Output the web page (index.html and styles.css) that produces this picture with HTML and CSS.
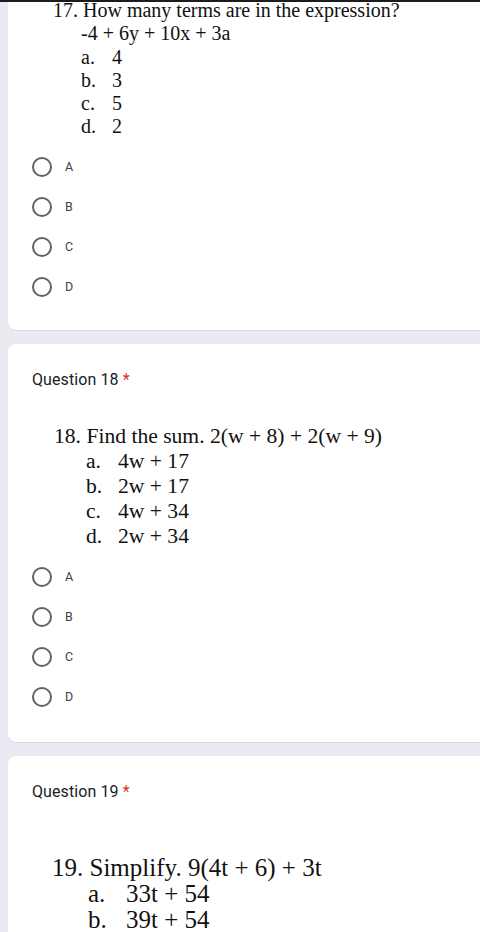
FILE: index.html
```html
<!DOCTYPE html>
<html lang="en">
<head>
  <meta charset="UTF-8" />
  <meta name="viewport" content="width=device-width, initial-scale=1.0"/>
  <title>Quiz – Questions 17 to 19</title>
  <link rel="stylesheet" href="styles.css">
</head>
<body>
<div class="top-edge"></div>

<div class="form">

  <!-- Question 17 (header scrolled out of view) -->
  <div class="card card-first">
    <div class="prompt q17">
      <div class="prompt-title">17. How many terms are in the expression?</div>
      <div class="prompt-line">-4 + 6y + 10x + 3a</div>
      <div class="choice"><span class="letter">a.</span><span>4</span></div>
      <div class="choice"><span class="letter">b.</span><span>3</span></div>
      <div class="choice"><span class="letter">c.</span><span>5</span></div>
      <div class="choice"><span class="letter">d.</span><span>2</span></div>
    </div>
    <div class="options">
      <label class="option"><span class="radio"></span><span class="option-text">A</span></label>
      <label class="option"><span class="radio"></span><span class="option-text">B</span></label>
      <label class="option"><span class="radio"></span><span class="option-text">C</span></label>
      <label class="option"><span class="radio"></span><span class="option-text">D</span></label>
    </div>
  </div>

  <div class="card">
    <div class="q-header">Question 18 <span class="required">*</span></div>
    <div class="prompt q18">
      <div class="prompt-title">18. Find the sum. 2(w + 8) + 2(w + 9)</div>
      <div class="choice"><span class="letter">a.</span><span>4w + 17</span></div>
      <div class="choice"><span class="letter">b.</span><span>2w + 17</span></div>
      <div class="choice"><span class="letter">c.</span><span>4w + 34</span></div>
      <div class="choice"><span class="letter">d.</span><span>2w + 34</span></div>
    </div>
    <div class="options">
      <label class="option"><span class="radio"></span><span class="option-text">A</span></label>
      <label class="option"><span class="radio"></span><span class="option-text">B</span></label>
      <label class="option"><span class="radio"></span><span class="option-text">C</span></label>
      <label class="option"><span class="radio"></span><span class="option-text">D</span></label>
    </div>
  </div>

  <div class="card card-last">
    <div class="q-header">Question 19 <span class="required">*</span></div>
    <div class="prompt q19">
      <div class="prompt-title">19. Simplify. 9(4t + 6) + 3t</div>
      <div class="choice"><span class="letter">a.</span><span>33t + 54</span></div>
      <div class="choice"><span class="letter">b.</span><span>39t + 54</span></div>
    </div>
  </div>

</div>
</body>
</html>
```

FILE: styles.css
```css
body {
  margin: 0;
  background: #ebeaf2;
  font-family: Roboto, 'Liberation Sans', sans-serif;
  color: #202124;
  height: 932px;
  overflow: hidden;
}

.top-edge {
  position: absolute;
  top: 0;
  left: 0;
  right: 0;
  height: 2px;
  background: #1c1c1e;
  z-index: 2;
}

.form {
  padding-left: 8px;
  display: flex;
  flex-direction: column;
  gap: 14px;
}

.card {
  background: #fff;
  border-radius: 8px 0 0 8px;
  box-shadow: 0 1px 0 #d8d7de;
  padding: 26.5px 0 24.5px 24px;
}

.card-first {
  border-radius: 0 0 0 8px;
  padding-top: 0;
  padding-bottom: 23px;
}

.card-last {
  padding-bottom: 40px;
}

.q-header {
  font-size: 16px;
  line-height: 20px;
  letter-spacing: 0.1px;
}

.required {
  color: #d93025;
}

/* question text pasted as an image in the original form */
.prompt {
  font-family: 'Liberation Serif', 'Times New Roman', serif;
  color: #111;
}

.choice {
  display: flex;
}

.q17 {
  font-size: 20px;
  line-height: 23.3px;
  margin-top: -1px;
  padding-left: 21px;
}

.q17 .prompt-line,
.q17 .choice {
  padding-left: 28px;
}

.q17 .letter {
  width: 31px;
}

.q18 {
  font-size: 21.6px;
  line-height: 25px;
  margin-top: 34px;
  padding-left: 22px;
}

.q18 .choice {
  padding-left: 32px;
}

.q18 .letter {
  width: 32px;
}

.q19 {
  font-size: 25px;
  line-height: 26px;
  margin-top: 52.6px;
  padding-left: 20px;
}

.q19 .choice {
  padding-left: 36px;
}

.q19 .letter {
  width: 38px;
}

.options {
  margin-top: 8px;
  display: flex;
  flex-direction: column;
}

.option {
  height: 40px;
  display: flex;
  align-items: center;
  gap: 13px;
}

.radio {
  width: 20px;
  height: 20px;
  box-sizing: border-box;
  border: 2px solid #5f6368;
  border-radius: 50%;
}

.option-text {
  font-size: 12.5px;
  line-height: 16px;
  color: #3c4043;
}
```
